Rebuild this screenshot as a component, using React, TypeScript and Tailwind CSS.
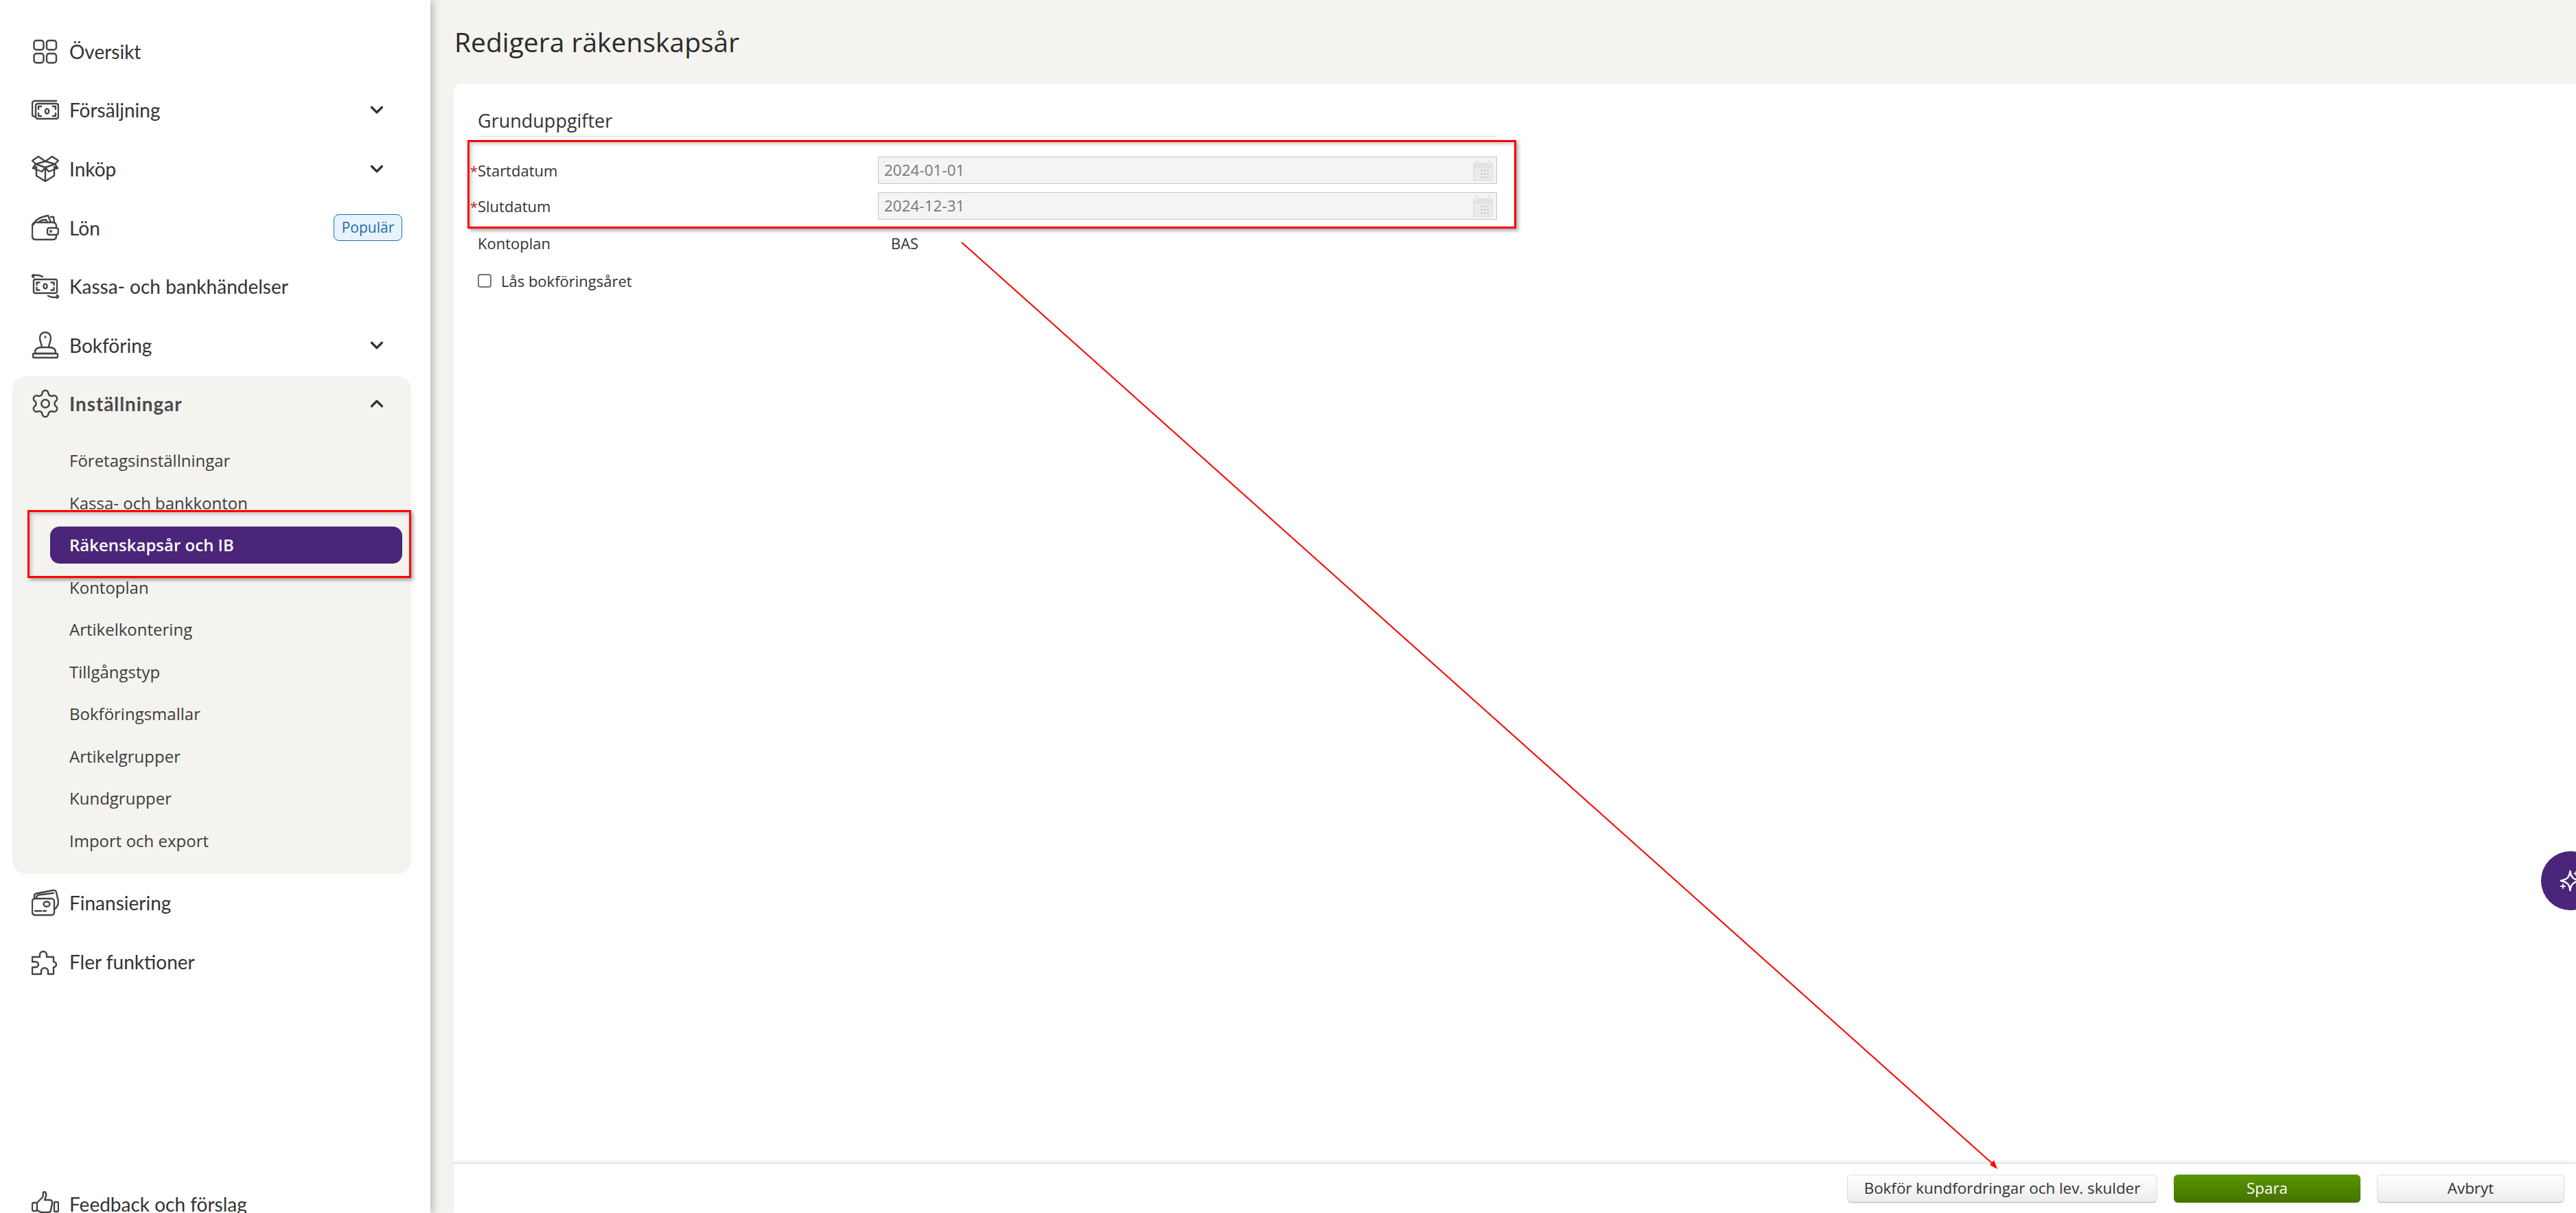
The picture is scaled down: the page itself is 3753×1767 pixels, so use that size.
import type { ReactNode } from "react"
import { ChevronDown, ChevronUp, Settings } from "lucide-react"

function Icon({ children }: { children: ReactNode }) {
  return (
    <svg viewBox="0 0 40 40" className="w-10 h-10 shrink-0" fill="none" stroke="#444" strokeWidth="2.4" strokeLinecap="round" strokeLinejoin="round">
      {children}
    </svg>
  )
}

const GridIcon = () => (
  <Icon>
    <rect x="3.5" y="4" width="14" height="13.5" rx="3.5" />
    <rect x="22" y="4" width="14" height="13.5" rx="3.5" />
    <rect x="3.5" y="23" width="14" height="13.5" rx="3.5" />
    <rect x="22" y="23" width="14" height="13.5" rx="3.5" />
  </Icon>
)

const MoneyIcon = () => (
  <Icon>
    <path d="M5 30 C2 30 1 28 1 26 V11 C1 9 2 7 5 7 H36" />
    <rect x="6" y="11" width="33" height="22" rx="3" />
    <ellipse cx="22.5" cy="22" rx="2.6" ry="3.6" />
    <path d="M10 19 V15 H14 M31 15 H35 V19 M10 25 V29 H14 M35 25 V29 H31" />
  </Icon>
)

const BoxIcon = () => (
  <Icon>
    <path d="M20 9 L10 2 L1 8 L6 13 L20 9 L34 13 L39 8 L30 2 L20 9" />
    <path d="M6 13 L20 18 L34 13" />
    <path d="M2 19 L7 17 V30 L20 38 L33 30 V17 L38 19 L34 13" />
    <path d="M20 18 V38 M6 13 L2 19 M20 18 L15 24 L2 19 M20 18 L25 24 L38 19" />
  </Icon>
)

const WalletIcon = () => (
  <Icon>
    <path d="M36 20 V17 C36 14 34 12 31 12 H6 C3 12 1 14 1 17 V32 C1 35 3 37 6 37 H31 C34 37 36 35 36 32 V30" />
    <rect x="23" y="20" width="16" height="10" rx="3" />
    <circle cx="28" cy="25" r="0.8" />
    <path d="M3 15 C5 8 13 4 24 2 L28 12 M10 12 C13 9 17 8 21 8 L23 12 M28 4 H32 L33 12" />
  </Icon>
)

const TransferIcon = () => (
  <Icon>
    <rect x="3" y="10" width="34" height="20" rx="2.5" />
    <ellipse cx="20" cy="20" rx="2.6" ry="3.4" />
    <path d="M7.5 18 V14.5 H11.5 M28.5 14.5 H32.5 V18 M7.5 22 V25.5 H11.5 M32.5 22 V25.5 H28.5" />
    <path d="M3 3 L0.5 5 L3 7 M1 5 C6 3 10 3 16 6" />
    <path d="M37 37 L39.5 35 L37 33 M39 35 C34 37 30 37 24 34" />
  </Icon>
)

const StampIcon = () => (
  <Icon>
    <path d="M15 23 C15 18 12 15 12 9 C12 4 16 1 20 1 C24 1 28 4 28 9 C28 15 25 18 25 23" />
    <circle cx="20" cy="8" r="0.6" />
    <path d="M15 23 H25 C31 23 35 25 35 30 V32 H5 V30 C5 25 9 23 15 23 Z" />
    <rect x="2" y="32" width="36" height="6" rx="1.5" />
  </Icon>
)

const CardsIcon = () => (
  <Icon>
    <rect x="1" y="14" width="32" height="24" rx="4" />
    <path d="M4 14 V10 C4 8 5 7 7 6.5 L31 2 C34 1.5 36 3 36 5 L39 18 C39 22 37 27 33 30" />
    <path d="M7 13 C7 10 9 9 11 8.5 L32 6" />
    <ellipse cx="22" cy="22" rx="4.5" ry="3.5" />
    <path d="M5 32 H14 M17 32 H21" />
  </Icon>
)

const PuzzleIcon = () => (
  <Icon>
    <path d="M1 13 H12 V10 A5 5 0 1 1 22 10 V13 H32 V20 A4 4 0 1 1 32 28 V38 H24 V34 A5 5 0 0 0 14 34 V38 H1 V28 H6 A4 4 0 0 0 6 20 H1 Z" />
  </Icon>
)

const ThumbIcon = () => (
  <Icon>
    <path d="M8 18 L16 10 C17 8 17 5 17 3 C20 1 22 4 21 8 L19 14 H27 C30 14 30 17 30 19 L28 29 C28 31 26 32 24 32 H14 L8 29" />
    <rect x="1" y="18" width="7" height="12" rx="2" />
    <rect x="33" y="17" width="6" height="14" rx="1.5" />
  </Icon>
)

function NavItem({ icon, label, chevron, badge }: { icon: ReactNode; label: string; chevron?: boolean; badge?: boolean }) {
  return (
    <div className="ml-[18px] mr-[28px] h-[85.6px] pl-[28px] pr-[13px] flex items-center shrink-0">
      {icon}
      <span className="ml-[15px] font-['Lato',sans-serif] text-[28px] text-[#333]">{label}</span>
      {chevron && <ChevronDown className="ml-auto mr-[22px] text-[#333]" size={30} strokeWidth={2.6} />}
      {badge && (
        <span className="ml-auto w-[100px] h-[39px] flex items-center justify-center rounded-lg border border-[#1a6fb0] bg-[#e8f2fa] text-[21px] font-medium text-[#1a6fb0] font-['Open_Sans',sans-serif]">
          Populär
        </span>
      )}
    </div>
  )
}

const subItems = [
  "Företagsinställningar",
  "Kassa- och bankkonton",
  "Räkenskapsår och IB",
  "Kontoplan",
  "Artikelkontering",
  "Tillgångstyp",
  "Bokföringsmallar",
  "Artikelgrupper",
  "Kundgrupper",
  "Import och export",
]

function CalendarIcon() {
  return (
    <svg viewBox="0 0 29 32" className="w-[29px] h-[32px] ml-auto">
      <rect x="0" y="5" width="29" height="27" rx="2" fill="#e2e2e2" />
      <rect x="2" y="13" width="25" height="17" fill="#ececec" />
      <path d="M5 0 V8 M23 0 V8" stroke="#e2e2e2" strokeWidth="2.5" strokeLinecap="round" />
      <path d="M5 3 V8 M23 3 V8" stroke="#f4f4f4" strokeWidth="1" />
      <g fill="#d4d4d4">
        <rect x="11" y="15" width="3" height="3" />
        <rect x="15.5" y="15" width="3" height="3" />
        <rect x="20" y="15" width="3" height="3" />
        <rect x="11" y="20" width="3" height="3" />
        <rect x="15.5" y="20" width="3" height="3" />
        <rect x="20" y="20" width="3" height="3" />
        <rect x="11" y="25" width="3" height="3" />
        <rect x="15.5" y="25" width="3" height="3" />
        <rect x="20" y="25" width="3" height="3" />
      </g>
    </svg>
  )
}

function DateRow({ label, value }: { label: string; value: string }) {
  return (
    <div className="flex items-center h-10">
      <div className="w-[583px] relative text-[#333]">
        <span className="absolute left-[-11px] top-[3px] text-[#c8102e] text-[20px]">*</span>
        {label}
      </div>
      <div className="w-[902px] h-10 flex items-center pl-[8px] pr-[5px] bg-[#f4f4f4] border border-[#c6c6c6] text-[22.5px] text-[#777]">
        {value}
        <CalendarIcon />
      </div>
    </div>
  )
}

export default function App() {
  return (
    <div className="relative h-screen flex overflow-hidden bg-[#f4f3ef] font-['Open_Sans',sans-serif] text-[22px]">
      {/* Sidebar */}
      <aside className="w-[627px] shrink-0 bg-white z-10 shadow-[5px_0_10px_rgba(0,0,0,0.2)] pt-[32px] flex flex-col">
        <NavItem icon={<GridIcon />} label="Översikt" />
        <NavItem icon={<MoneyIcon />} label="Försäljning" chevron />
        <NavItem icon={<BoxIcon />} label="Inköp" chevron />
        <NavItem icon={<WalletIcon />} label="Lön" badge />
        <NavItem icon={<TransferIcon />} label="Kassa- och bankhändelser" />
        <NavItem icon={<StampIcon />} label="Bokföring" chevron />

        {/* Inställningar group */}
        <div className="ml-[18px] mr-[28px] mt-[2px] h-[725px] shrink-0 rounded-[20px] bg-[#f4f3ef]">
          <div className="h-[80px] pl-[28px] pr-[13px] flex items-center">
            <Settings className="-mx-[3px] text-[#444]" size={46} strokeWidth={1.3} />
            <span className="ml-[15px] font-['Lato',sans-serif] text-[28px] font-bold tracking-[0.9px] text-[#4a4a4a]">Inställningar</span>
            <ChevronUp className="ml-auto mr-[22px] text-[#333]" size={30} strokeWidth={2.6} />
          </div>
          <div className="mt-[13px] pl-[55px] pr-[13px] flex flex-col text-[24px]">
            {subItems.map((item) =>
              item === "Räkenskapsår och IB" ? (
                <div key={item} className="h-[54px] my-[3.7px] pl-[28px] flex items-center rounded-[14px] bg-[#4a2579] text-white font-semibold">
                  {item}
                </div>
              ) : (
                <div key={item} className="h-[61.5px] pl-[28px] flex items-center text-[#3c3c3c]">
                  {item}
                </div>
              ),
            )}
          </div>
        </div>

        <NavItem icon={<CardsIcon />} label="Finansiering" />
        <NavItem icon={<PuzzleIcon />} label="Fler funktioner" />
        <div className="mt-[267px]">
          <NavItem icon={<ThumbIcon />} label="Feedback och förslag" />
        </div>
      </aside>

      {/* Main */}
      <main className="flex-1 min-w-0 pl-[34px] flex flex-col">
        <header className="h-[122px] shrink-0 pl-[1px] pb-[2px] flex items-center">
          <h1 className="text-[39px] leading-none text-[#2b2b2b]">Redigera räkenskapsår</h1>
        </header>

        <div className="flex-1 min-h-0 flex flex-col bg-white rounded-tl-xl">
          <div className="flex-1 pl-[35px]">
            <div className="w-[1485px] h-[77px] pt-[34px] border-b border-[#dedede] text-[27px] leading-[40px] text-[#333]">Grunduppgifter</div>
            <div className="w-[1485px] mt-[29px] flex flex-col gap-3">
              <DateRow label="Startdatum" value="2024-01-01" />
              <DateRow label="Slutdatum" value="2024-12-31" />
            </div>
            <div className="flex items-center h-10 mt-[14px] text-[#333]">
              <div className="w-[602px]">Kontoplan</div>
              BAS
            </div>
            <label className="flex items-center h-10 mt-[15px] text-[#333]">
              <input type="checkbox" className="w-5 h-5 appearance-none rounded border-2 border-[#767676] bg-white" />
              <span className="ml-[14px]">Lås bokföringsåret</span>
            </label>
          </div>

          <footer className="h-[73px] shrink-0 pr-[17px] flex items-center justify-end gap-6 bg-white border-t border-[#d8d8d8] shadow-[0_-3px_5px_rgba(0,0,0,0.06)] text-[22.4px]">
            <button className="w-[452px] h-[41px] rounded-md border border-[#dcdcdc] border-b-[#b4b4b4] bg-gradient-to-b from-white to-[#ececec] text-[#333]">
              Bokför kundfordringar och lev. skulder
            </button>
            <button className="w-[272px] h-[41px] rounded-md bg-gradient-to-b from-[#5b9600] to-[#447200] text-white">Spara</button>
            <button className="w-[273px] h-[41px] rounded-md border border-[#dcdcdc] border-b-[#b4b4b4] bg-gradient-to-b from-white to-[#ececec] text-[#333]">Avbryt</button>
          </footer>
        </div>
      </main>

      {/* Floating assistant button */}
      <div className="absolute left-[3702px] top-[1240px] w-[86px] h-[86px] z-20 rounded-full bg-[#4a2579] flex items-center justify-center">
        <svg viewBox="0 0 32 32" className="w-8 h-8" fill="none" stroke="white" strokeWidth="2.5" strokeLinejoin="round" strokeLinecap="round">
          <path d="M15.5 2 C16.5 10 19 14 30 16 C19 18 16.5 22 15.5 30 C14.5 22 12 18 2 16 C12 14 14.5 10 15.5 2 Z" />
          <path d="M5 21 V27 M2 24 H8" strokeWidth="1.8" />
          <path d="M24 3 V8 M21.5 5.5 H26.5" strokeWidth="1.8" />
        </svg>
      </div>

      {/* Red annotations */}
      <div className="absolute left-[681px] top-[204px] w-[1528px] h-[129px] z-30 border-[3px] border-[#f00] shadow-[3px_3px_5px_rgba(0,0,0,0.35),inset_3px_3px_5px_rgba(0,0,0,0.2)]" />
      <div className="absolute left-[40px] top-[743px] w-[559px] h-[99px] z-30 border-[3px] border-[#f00] shadow-[3px_3px_5px_rgba(0,0,0,0.35),inset_3px_3px_5px_rgba(0,0,0,0.2)]" />
      <svg className="absolute inset-0 w-full h-full z-30 pointer-events-none" viewBox="0 0 3753 1767">
        <line x1="1401" y1="353" x2="2905" y2="1697" stroke="#f00" strokeWidth="2" />
        <path d="M2910 1703 L2899 1697 L2905 1690 Z" fill="#f00" />
      </svg>
    </div>
  )
}
